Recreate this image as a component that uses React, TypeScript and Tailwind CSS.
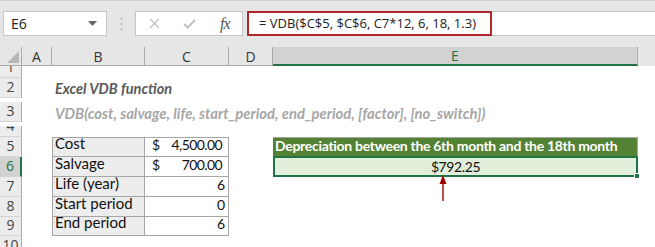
import React from "react";

const cal = { fontFamily: "Lato, 'Liberation Sans', sans-serif" };
const ui = { fontFamily: "'Open Sans', 'Noto Sans', sans-serif" };

function RowHead({ n, h, sel }: { n: string; h: string; sel?: boolean }) {
  return (
    <div
      className={`w-[22px] shrink-0 flex items-end justify-center overflow-hidden border-b border-[#d4d4d4] ${h} ${
        sel ? "bg-[#d2d2d2] text-[#217346] border-r-2 border-r-[#217346]" : "bg-[#ececec] text-[#444] border-r border-r-[#ababab]"
      }`}
    >
      <span className="text-[14px] leading-[18px] pb-[1px]" style={ui}>
        {n}
      </span>
    </div>
  );
}

export default function App() {
  return (
    <div className="w-[655px] h-[247px] overflow-hidden bg-white relative" style={cal}>
      {/* Formula bar area */}
      <div className="h-[47px] bg-[#e6e6e6] border-t border-[#d0d0d0] pt-[10px] flex items-start">
        <div className="ml-[3px] w-[104px] h-[25px] bg-white border border-[#c6c6c6] flex items-center justify-between pl-[7px] pr-[9px]">
          <span className="text-[14px] text-[#222]" style={ui}>
            E6
          </span>
          <svg width="9" height="5" viewBox="0 0 9 5">
            <path d="M0 0 L9 0 L4.5 5 Z" fill="#666" />
          </svg>
        </div>
        <div className="w-[28px] h-[25px] flex items-center justify-center">
          <svg width="3" height="12" viewBox="0 0 3 12">
            <rect x="0.5" y="0" width="2" height="2" fill="#bcbcbc" />
            <rect x="0.5" y="5" width="2" height="2" fill="#bcbcbc" />
            <rect x="0.5" y="10" width="2" height="2" fill="#bcbcbc" />
          </svg>
        </div>
        <div className="w-[108px] h-[25px] bg-white border border-[#c6c6c6] flex items-center">
          <svg className="ml-[13px]" width="11" height="11" viewBox="0 0 11 11">
            <path d="M1 1 L10 10 M10 1 L1 10" stroke="#c2c2c2" strokeWidth="1.4" />
          </svg>
          <svg className="ml-[23px]" width="13" height="10" viewBox="0 0 13 10">
            <path d="M1 5 L4.5 8.5 L12 1" stroke="#c2c2c2" strokeWidth="2" fill="none" />
          </svg>
          <span
            className="ml-[24px] text-[16px] italic text-[#555] leading-none tracking-[-1px]"
            style={{ fontFamily: "'Liberation Serif', serif" }}
          >
            fx
          </span>
        </div>
        <div className="ml-[4px] flex-1 h-[25px] bg-white border-y border-[#c6c6c6] flex">
          <div className="w-[245px] h-[25px] -mt-px border-2 border-[#b0262b] flex items-center pl-[10px]">
            <span className="text-[13px] text-[#222] whitespace-nowrap" style={ui}>
              = VDB($C$5, $C$6, C7*12, 6, 18, 1.3)
            </span>
          </div>
        </div>
      </div>

      {/* Column headers */}
      <div className="h-[19px] flex bg-[#e6e6e6] text-[14px] text-[#333]" style={ui}>
        <div className="w-[22px] shrink-0 border-r border-b border-[#ababab] relative">
          <svg className="absolute right-[2px] bottom-[2px]" width="12" height="12" viewBox="0 0 12 12">
            <path d="M12 0 L12 12 L0 12 Z" fill="#b8b8b8" />
          </svg>
        </div>
        <div className="w-[30px] shrink-0 border-r border-b border-[#ababab] flex items-center justify-center">A</div>
        <div className="w-[93px] shrink-0 border-r border-b border-[#ababab] flex items-center justify-center">B</div>
        <div className="w-[84px] shrink-0 border-r border-b border-[#ababab] flex items-center justify-center">C</div>
        <div className="w-[44px] shrink-0 border-r border-b border-[#ababab] flex items-center justify-center">D</div>
        <div className="w-[365px] shrink-0 bg-[#d2d2d2] border-r border-r-[#ababab] border-b-2 border-b-[#217346] flex items-center justify-center text-[#217346]">
          E
        </div>
        <div className="flex-1 bg-[#e6e6e6]" />
      </div>

      {/* Sheet rows */}
      <div className="relative">
        {/* Row 1 */}
        <div className="flex">
          <RowHead n="1" h="h-[12px]" />
        </div>
        {/* Row 2 */}
        <div className="flex">
          <RowHead n="2" h="h-[20px]" />
          <div className="w-[30px] shrink-0" />
          <div className="flex items-end pl-[3px] pb-[2px] whitespace-nowrap text-[14.5px] font-bold italic text-[#595959]">
            Excel VDB function
          </div>
        </div>
        {/* Row 3 */}
        <div className="flex">
          <RowHead n="3" h="h-[20px]" />
          <div className="w-[30px] shrink-0" />
          <div className="flex items-end pl-[3px] pb-[2px] whitespace-nowrap text-[14.8px] font-bold italic text-[#a6a6a6]">
            VDB(cost, salvage, life, start_period, end_period, [factor], [no_switch])
          </div>
        </div>
        {/* Row 4 */}
        <div className="flex">
          <RowHead n="4" h="h-[11px]" />
        </div>
        {/* Row 5 */}
        <div className="flex">
          <RowHead n="5" h="h-[20px]" />
          <div className="w-[30px] shrink-0" />
          <div className="w-[93px] shrink-0 h-[20px] bg-[#ededed] border border-[#a6a6a6] flex items-end pl-[2px] pb-[1px] text-[15px] text-[#111]">
            Cost
          </div>
          <div className="w-[84px] shrink-0 h-[20px] border-y border-r border-[#a6a6a6] flex items-end justify-between pl-[7px] pr-[6px] pb-[1px] text-[14px] tracking-[-0.6px] text-[#111]">
            <span>$</span>
            <span>4,500.00</span>
          </div>
          <div className="w-[44px] shrink-0" />
          <div className="w-[365px] shrink-0 h-[20px] bg-[#548235] border-t border-r border-[#a6a6a6] flex items-end pl-[2px] pb-[1px] text-[14px] tracking-[-0.3px] font-bold text-white whitespace-nowrap">
            Depreciation between the 6th month and the 18th month
          </div>
        </div>
        {/* Row 6 */}
        <div className="flex">
          <RowHead n="6" h="h-[20px]" sel />
          <div className="w-[30px] shrink-0" />
          <div className="w-[93px] shrink-0 h-[20px] bg-[#ededed] border-x border-b border-[#a6a6a6] flex items-end pl-[2px] pb-[1px] text-[15px] text-[#111]">
            Salvage
          </div>
          <div className="w-[84px] shrink-0 h-[20px] border-b border-r border-[#a6a6a6] flex items-end justify-between pl-[7px] pr-[6px] pb-[1px] text-[14px] tracking-[-0.6px] text-[#111]">
            <span>$</span>
            <span>700.00</span>
          </div>
          <div className="w-[44px] shrink-0" />
          <div className="w-[365px] shrink-0 h-[21px] -mt-px bg-[#e2efda] border-2 border-[#217346] flex items-center justify-center text-[14px] tracking-[-0.4px] text-[#111] relative">
            $792.25
            <div className="absolute right-[-4px] bottom-[-4px] w-[6px] h-[6px] bg-[#217346] border border-white" />
          </div>
        </div>
        {/* Rows 7-9 */}
        {[
          ["7", "Life (year)", "6", "h-[20px]"],
          ["8", "Start period", "0", "h-[20px]"],
          ["9", "End period", "6", "h-[19px]"],
        ].map(([n, label, v, h]) => (
          <div className="flex" key={n}>
            <RowHead n={n} h={h} />
            <div className="w-[30px] shrink-0" />
            <div className={`w-[93px] shrink-0 ${h} bg-[#ededed] border-x border-b border-[#a6a6a6] flex items-end pl-[2px] pb-[1px] text-[15px] text-[#111]`}>
              {label}
            </div>
            <div className={`w-[84px] shrink-0 ${h} border-b border-r border-[#a6a6a6] flex items-end justify-end pr-[3px] pb-[1px] text-[14px] text-[#111]`}>
              {v}
            </div>
          </div>
        ))}
        {/* Row 10 */}
        <div className="flex">
          <RowHead n="10" h="h-[20px]" />
        </div>

        {/* Arrow */}
        <svg className="absolute left-[439px] top-[109px]" width="8" height="26" viewBox="0 0 8 26">
          <path d="M4 0 L7.5 9 L0.5 9 Z" fill="#a00000" />
          <rect x="3.3" y="8" width="1.4" height="18" fill="#a00000" />
        </svg>
      </div>
    </div>
  );
}
